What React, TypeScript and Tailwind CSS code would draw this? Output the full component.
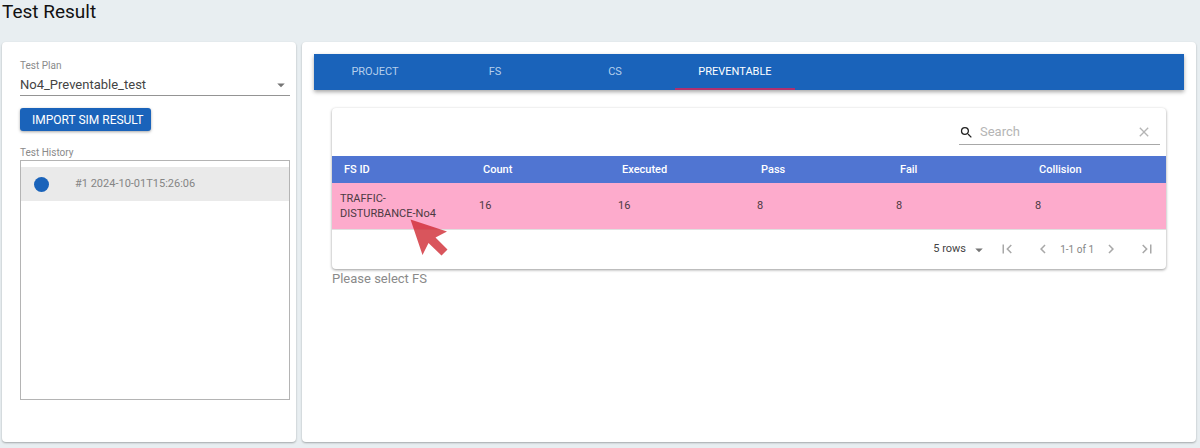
import { useState } from 'react';
import {
  MdArrowDropDown,
  MdChevronLeft,
  MdChevronRight,
  MdClear,
  MdFirstPage,
  MdLastPage,
  MdSearch,
} from 'react-icons/md';

const tabs = ['PROJECT', 'FS', 'CS', 'PREVENTABLE'];

const columns = ['FS ID', 'Count', 'Executed', 'Pass', 'Fail', 'Collision'];

const rows = [
  { id: 'TRAFFIC-DISTURBANCE-No4', count: 16, executed: 16, pass: 8, fail: 8, collision: 8 },
];

const history = ['#1 2024-10-01T15:26:06'];

function TestPlanPanel() {
  return (
    <aside className="flex w-[294px] shrink-0 flex-col rounded bg-white pt-4 pr-1.5 pb-[42px] pl-[18px] shadow-[0_1px_2px_rgba(0,0,0,0.3)]">
      <label htmlFor="plan" className="text-[10px] leading-4 text-[#8a8a8a]">
        Test Plan
      </label>
      <div className="relative border-b border-[#949494]">
        <select
          id="plan"
          className="block h-[21px] w-full appearance-none bg-transparent text-[13px] leading-5 text-[#444] outline-none"
        >
          <option>No4_Preventable_test</option>
        </select>
        <MdArrowDropDown className="pointer-events-none absolute top-0.5 right-0 size-[18px] text-[#757575]" />
      </div>
      <button className="mt-3 h-[23px] self-start rounded-[3px] bg-[#1a63ba] pr-2 pl-3 text-xs text-white shadow-[0_1px_3px_rgba(0,0,0,0.35)]">
        IMPORT SIM RESULT
      </button>
      <h2 className="mt-3.5 text-[10px] leading-[15px] text-[#8a8a8a]">Test History</h2>
      <ul className="flex-1 border border-[#b4b4b4] pt-1.5">
        {history.map((item) => (
          <li key={item}>
            <button className="flex h-[34px] w-full items-center gap-[26px] bg-[#eaeaea] pl-[13px] text-[11px] text-[#858585]">
              <span className="size-[15px] rounded-full bg-[#1a63ba]" />
              {item}
            </button>
          </li>
        ))}
      </ul>
    </aside>
  );
}

function ResultTable() {
  const [search, setSearch] = useState('');

  return (
    <section className="rounded bg-white shadow-[0_1px_3px_rgba(0,0,0,0.4)]">
      <div className="flex h-12 items-start justify-end pt-3 pr-1.5">
        <div className="flex h-[25px] w-[201px] items-center border-b border-[#a8a8a8] pr-2">
          <MdSearch className="size-[15px] text-[#222]" />
          <input
            aria-label="Search"
            placeholder="Search"
            value={search}
            onChange={(e) => setSearch(e.target.value)}
            className="ml-1.5 min-w-0 flex-1 text-[13px] text-[#444] outline-none placeholder:text-[#b5b5b5]"
          />
          <button aria-label="Clear search" onClick={() => setSearch('')} className="text-[#b5b5b5]">
            <MdClear className="size-4" />
          </button>
        </div>
      </div>

      <table className="w-full table-fixed text-left">
        <thead className="bg-[#5075d2] text-[11px] text-white">
          <tr className="h-[27px]">
            {columns.map((column) => (
              <th key={column} className="px-3 pt-0.5 font-medium">
                {column}
              </th>
            ))}
          </tr>
        </thead>
        <tbody className="bg-[#fdabcc] text-[11px] leading-[15px] text-[#4c3a42]">
          {rows.map((row) => (
            <tr key={row.id} className="h-[46px] border-b border-[#e0e0e0]">
              <td className="relative pr-6 pl-2">
                {row.id}
                <svg
                  viewBox="0 0 38 38"
                  className="pointer-events-none absolute top-9 left-[78px] size-[38px]"
                >
                  <path d="M0.5 0.5 37 12.5 25.5 18.5 37.5 30.5 31.5 36.5 18.5 24 12.5 36Z" fill="#cf2a33" fillOpacity="0.8" />
                </svg>
              </td>
              <td className="px-2">{row.count}</td>
              <td className="px-2">{row.executed}</td>
              <td className="px-2">{row.pass}</td>
              <td className="px-2">{row.fail}</td>
              <td className="px-2">{row.collision}</td>
            </tr>
          ))}
        </tbody>
      </table>

      <div className="flex h-[39px] items-center justify-end pr-2 text-[#a8a8a8]">
        <div className="relative mr-2">
          <select
            aria-label="Rows per page"
            className="block w-[55px] appearance-none bg-transparent text-[11px] text-[#444] outline-none"
          >
            <option>5 rows</option>
          </select>
          <MdArrowDropDown className="pointer-events-none absolute top-0 right-0 size-[18px] text-[#757575]" />
        </div>
        <button aria-label="First page" className="mr-3.5 p-0.5">
          <MdFirstPage className="size-[18px]" />
        </button>
        <button aria-label="Previous page" className="mr-1.5 p-0.5">
          <MdChevronLeft className="size-[18px]" />
        </button>
        <span className="text-[10px] text-[#858585]">1-1 of 1</span>
        <button aria-label="Next page" className="ml-1.5 p-0.5">
          <MdChevronRight className="size-[18px]" />
        </button>
        <button aria-label="Last page" className="ml-3.5 p-0.5">
          <MdLastPage className="size-[18px]" />
        </button>
      </div>
    </section>
  );
}

function App() {
  const [activeTab, setActiveTab] = useState('PREVENTABLE');

  return (
    <div className="flex min-h-screen flex-col bg-[#e8eef1] pb-1.5 font-[Roboto,sans-serif]">
      <h1 className="h-[42px] pl-0.5 text-[19px] leading-6 text-[#111]">Test Result</h1>
      <div className="flex flex-1 gap-1.5 pr-1 pl-0.5">
        <TestPlanPanel />
        <main className="min-w-0 flex-1 rounded bg-white p-3 shadow-[0_1px_2px_rgba(0,0,0,0.3)]">
          <nav className="flex h-9 bg-[#1a63ba] pl-px shadow-[0_2px_4px_rgba(0,0,0,0.35)]">
            {tabs.map((tab) => (
              <button
                key={tab}
                onClick={() => setActiveTab(tab)}
                className={`w-[120px] border-b-2 pt-0.5 text-[11px] ${
                  tab === activeTab ? 'border-[#b0306e] text-white' : 'border-transparent text-[#b5cfec]'
                }`}
              >
                {tab}
              </button>
            ))}
          </nav>
          <div className="px-[18px] pt-[18px]">
            <ResultTable />
            <p className="text-[13px] leading-5 text-[#8a8a8a]">Please select FS</p>
          </div>
        </main>
      </div>
    </div>
  );
}

export default App;
